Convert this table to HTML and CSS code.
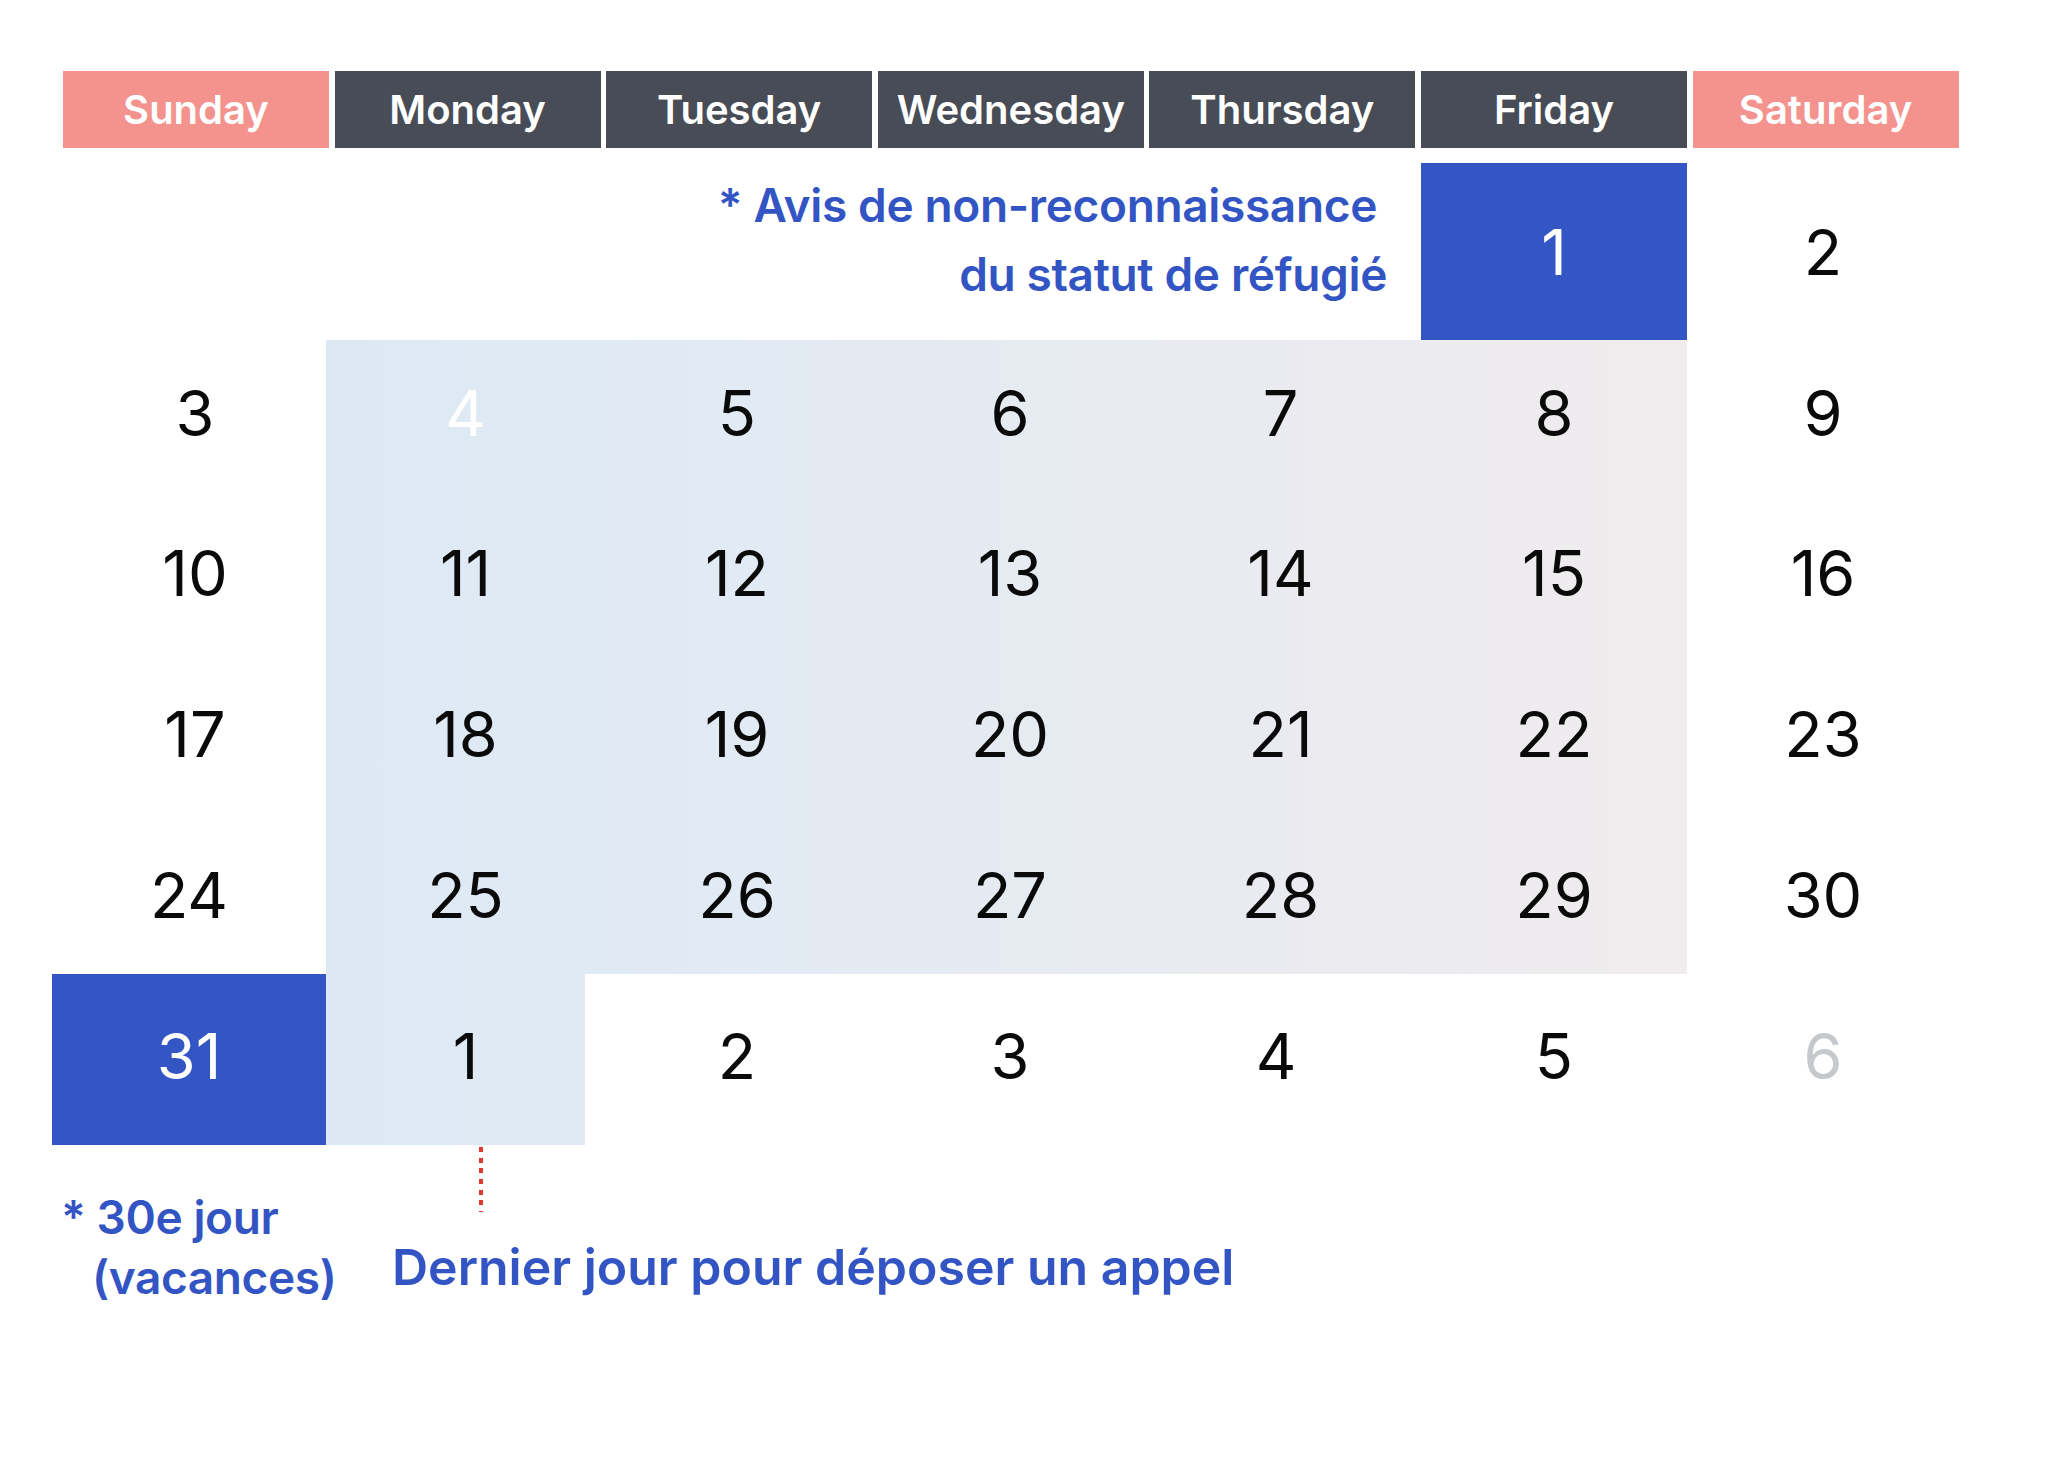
FILE: index.html
```html
<!DOCTYPE html>
<html lang="fr">
<head>
<meta charset="utf-8">
<title>Calendrier</title>
<link rel="stylesheet" href="styles.css">
</head>
<body>
<div class="page">
  <div class="weekdays">
    <div class="wd weekend">Sunday</div>
    <div class="wd">Monday</div>
    <div class="wd">Tuesday</div>
    <div class="wd">Wednesday</div>
    <div class="wd">Thursday</div>
    <div class="wd">Friday</div>
    <div class="wd weekend">Saturday</div>
  </div>

  <div class="month">
    <div class="week w1">
      <div class="note-top">
        <span class="line line-1">* Avis de non-reconnaissance</span>
        <span class="line">du statut de réfugié</span>
      </div>
      <div class="day mark">1</div>
      <div class="day">2</div>
    </div>

    <div class="week w2">
      <div class="day sun">3</div>
      <div class="day mon g1 faint">4</div>
      <div class="day g2">5</div>
      <div class="day g3">6</div>
      <div class="day thu g4">7</div>
      <div class="day g5">8</div>
      <div class="day">9</div>
    </div>

    <div class="week w3">
      <div class="day sun">10</div>
      <div class="day mon g1">11</div>
      <div class="day g2">12</div>
      <div class="day g3">13</div>
      <div class="day thu g4">14</div>
      <div class="day g5">15</div>
      <div class="day">16</div>
    </div>

    <div class="week w4">
      <div class="day sun">17</div>
      <div class="day mon g1">18</div>
      <div class="day g2">19</div>
      <div class="day g3">20</div>
      <div class="day thu g4">21</div>
      <div class="day g5">22</div>
      <div class="day">23</div>
    </div>

    <div class="week w5">
      <div class="day">24</div>
      <div class="day mon g1">25</div>
      <div class="day g2">26</div>
      <div class="day g3">27</div>
      <div class="day thu g4">28</div>
      <div class="day g5">29</div>
      <div class="day">30</div>
    </div>

    <div class="week w6">
      <div class="day mark">31</div>
      <div class="day mon g1">1</div>
      <div class="day">2</div>
      <div class="day">3</div>
      <div class="day">4</div>
      <div class="day">5</div>
      <div class="day muted">6</div>
    </div>
  </div>

  <div class="notes">
    <div class="note-left">
      <div>* 30e jour</div>
      <div class="indent">(vacances)</div>
    </div>
    <div class="note-right">
      <div class="dots"></div>
      <div class="deadline">Dernier jour pour déposer un appel</div>
    </div>
  </div>
</div>
</body>
</html>
```

FILE: styles.css
```css
html, body {
  margin: 0;
  padding: 0;
  background: #ffffff;
}

body {
  font-family: Inter, "Noto Sans", "Liberation Sans", sans-serif;
  color: #0a0a0a;
}

.page {
  padding: 71px 0 0 52px;
}

/* weekday header */
.weekdays {
  margin-left: 11px;
  display: grid;
  grid-template-columns: repeat(7, 266px);
  column-gap: 5.6px;
  height: 77px;
}

.wd {
  background: #474c56;
  color: #ffffff;
  font-size: 40px;
  font-weight: 600;
  display: flex;
  align-items: center;
  justify-content: center;
}

.wd.weekend {
  background: #f4938e;
}

/* month grid */
.month {
  margin-top: 15px;
  display: grid;
  grid-template-columns: 274px 259px 304px 242px 290px 266px 272px;
  grid-template-rows: 177px repeat(4, 158.5px) 171px;
}

.week {
  display: contents;
}

.day {
  display: flex;
  align-items: center;
  justify-content: center;
  font-size: 63px;
  font-weight: 400;
  color: #0a0a0a;
}

.w2 .day { padding-bottom: 13px; }
.w3 .day { padding-bottom: 10px; }
.w4 .day { padding-bottom: 5px; }
.w6 .day { padding-bottom: 8px; }

.day.sun { padding-left: 12px; }
.day.mon { padding-left: 20px; }
.day.thu { padding-left: 9px; }

.day.mark {
  background: #3356c4;
  color: #ffffff;
}

.day.faint {
  color: #ffffff;
}

.day.muted {
  color: #c5c8cc;
}

.g1 { background: linear-gradient(90deg, #dce9f5, #e0eaf4); }
.g2 { background: linear-gradient(90deg, #e0eaf4, #e4eaf2); }
.g3 { background: linear-gradient(90deg, #e4eaf2, #e8ebf1); }
.g4 { background: linear-gradient(90deg, #e8ebf1, #ecebef); }
.g5 { background: linear-gradient(90deg, #ecebef, #f0ecee); }

.note-top {
  grid-column: 1 / 6;
  display: flex;
  flex-direction: column;
  align-items: flex-end;
  padding: 8px 34px 0 0;
  font-size: 46px;
  font-weight: 600;
  line-height: 69px;
  letter-spacing: -0.35px;
  color: #3355c4;
}

.line {
  display: block;
}

.line-1 {
  padding-right: 10px;
}

/* bottom notes */
.notes {
  display: flex;
  align-items: flex-start;
}

.note-left {
  margin-left: 9px;
  width: 331px;
  padding-top: 42px;
  font-size: 46px;
  font-weight: 600;
  line-height: 60px;
  letter-spacing: -0.4px;
  color: #3355c4;
}

.indent {
  padding-left: 31px;
}

.note-right {
  display: flex;
  flex-direction: column;
  padding-top: 2px;
}

.dots {
  margin-left: 87px;
  width: 4px;
  height: 65px;
  background: repeating-linear-gradient(to bottom, #e0382b 0 5px, transparent 5px 10.7px);
}

.deadline {
  margin-top: 25px;
  font-size: 50px;
  font-weight: 600;
  line-height: 60px;
  color: #3355c4;
}
```
